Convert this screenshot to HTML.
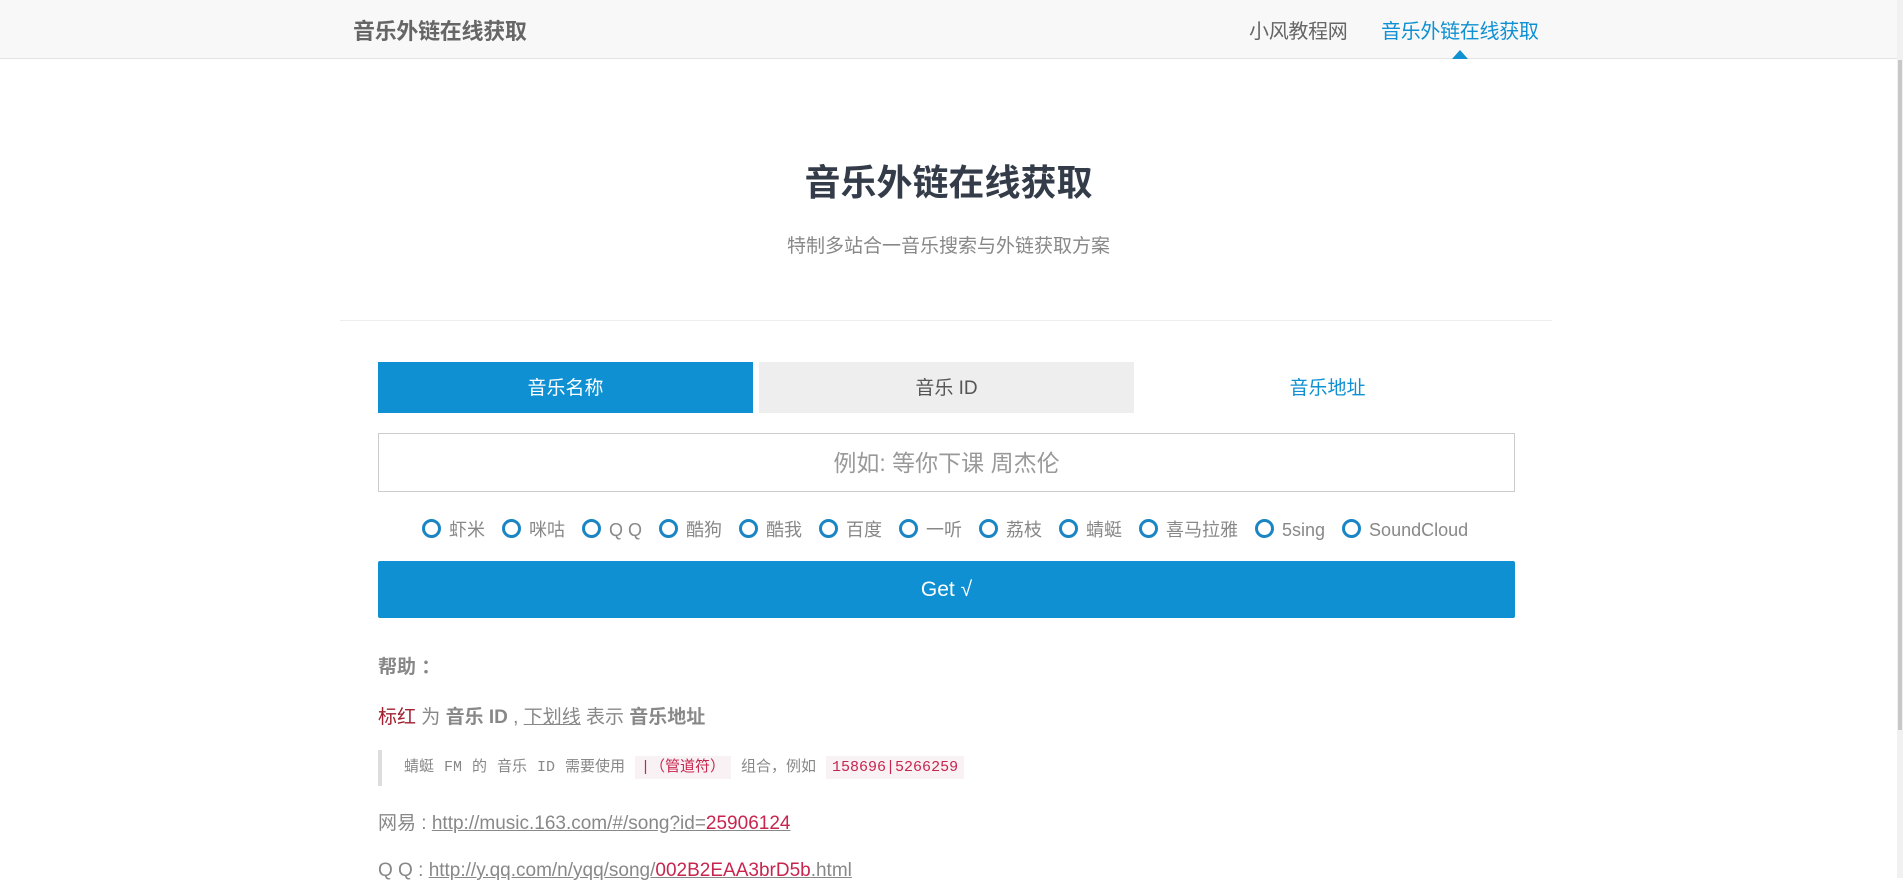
<!DOCTYPE html>
<html><head><meta charset="utf-8">
<style>
*{box-sizing:border-box;margin:0;padding:0}
body{width:1903px;height:878px;overflow:hidden;background:#fff;font-family:"Liberation Sans","Noto Sans CJK SC",sans-serif;color:#777;position:relative}
.nav{position:absolute;left:0;top:0;width:1897px;height:59px;background:#f8f8f8;border-bottom:1px solid #e3e3e3}
.brand{position:absolute;left:353px;top:14px;font-size:22px;font-weight:bold;color:#666;letter-spacing:-0.3px}
.nl{position:absolute;top:15px;font-size:20px;color:#666;letter-spacing:-0.3px}
.arrow{position:absolute;left:1452px;top:50px;width:0;height:0;border-left:8px solid transparent;border-right:8px solid transparent;border-bottom:9px solid #0e90d2}
.sb{position:absolute;right:0;top:0;width:6px;height:878px;background:#f1f1f1}
.sb div{position:absolute;left:1px;top:60px;width:4px;height:670px;background:#c8c8c8}
h1{position:absolute;left:0;width:1897px;text-align:center;top:154px;font-size:36px;color:#333c48;font-weight:bold}
.sub{position:absolute;left:0;width:1897px;text-align:center;top:231px;font-size:19px;color:#888}
.hr{position:absolute;left:340px;width:1212px;top:320px;border-top:1px solid #eee}
.tab{position:absolute;top:362px;height:51px;width:375px;text-align:center;line-height:53px;font-size:19px}
.inp{position:absolute;left:378px;top:433px;width:1137px;height:59px;border:1px solid #ccc;text-align:center;line-height:59px;font-size:23px;color:#999}
.radios{position:absolute;left:422px;top:516px;font-size:18px;color:#888;white-space:nowrap}
.radios span{display:inline-block;margin-right:17px}
.radios i{display:inline-block;width:19px;height:19px;border:3px solid #1a85c4;border-radius:50%;vertical-align:-2px;margin-right:8px}
.btn{position:absolute;left:378px;top:561px;width:1137px;height:57px;background:#0e90d2;color:#fff;text-align:center;line-height:57px;font-size:21px;border-radius:2px}
.p{position:absolute;left:378px;font-size:19px;color:#888;white-space:nowrap}
.red{color:#a0202f}
code{font-family:"Liberation Mono","Noto Sans CJK SC",monospace;background:#f9f2f4;color:#c7254e;padding:3px 6px;font-size:15px}
.bq{position:absolute;left:378px;top:750px;height:36px;border-left:4px solid #ddd;padding-left:22px;line-height:36px;font-family:"Liberation Mono","Noto Sans CJK SC",monospace;font-size:15px;color:#888;white-space:nowrap;word-spacing:1px}
a{color:#888}
a b{color:#c7254e;font-weight:normal}
</style></head><body>
<div class="nav">
<div class="brand">音乐外链在线获取</div>
<div class="nl" style="left:1249px">小风教程网</div>
<div class="nl" style="left:1381px;color:#0e90d2">音乐外链在线获取</div>
<div class="arrow"></div>
</div>
<div class="sb"><div></div></div>
<h1>音乐外链在线获取</h1>
<div class="sub">特制多站合一音乐搜索与外链获取方案</div>
<div class="hr"></div>
<div class="tab" style="left:378px;background:#0e90d2;color:#fff">音乐名称</div>
<div class="tab" style="left:759px;background:#eee;color:#555">音乐 ID</div>
<div class="tab" style="left:1140px;color:#0e90d2">音乐地址</div>
<div class="inp">例如: 等你下课 周杰伦</div>
<div class="radios"><span><i></i>虾米</span><span><i></i>咪咕</span><span><i></i>Q Q</span><span><i></i>酷狗</span><span><i></i>酷我</span><span><i></i>百度</span><span><i></i>一听</span><span><i></i>荔枝</span><span><i></i>蜻蜓</span><span><i></i>喜马拉雅</span><span><i></i>5sing</span><span><i></i>SoundCloud</span></div>
<div class="btn">Get √</div>
<div class="p" style="top:652px;font-weight:bold">帮助 ：</div>
<div class="p" style="top:702px"><span class="red">标红</span> 为 <b>音乐 ID</b> , <u>下划线</u> 表示 <b>音乐地址</b></div>
<div class="bq">蜻蜓 FM 的 音乐 ID 需要使用 <code>|（管道符）</code> 组合，例如 <code>158696|5266259</code></div>
<div class="p" style="top:808px">网易 : <a href="#">http://music.163.com/#/song?id=<b>25906124</b></a></div>
<div class="p" style="top:860px">Q Q : <a href="#">http://y.qq.com/n/yqq/song/<b>002B2EAA3brD5b</b>.html</a></div>
</body></html>
